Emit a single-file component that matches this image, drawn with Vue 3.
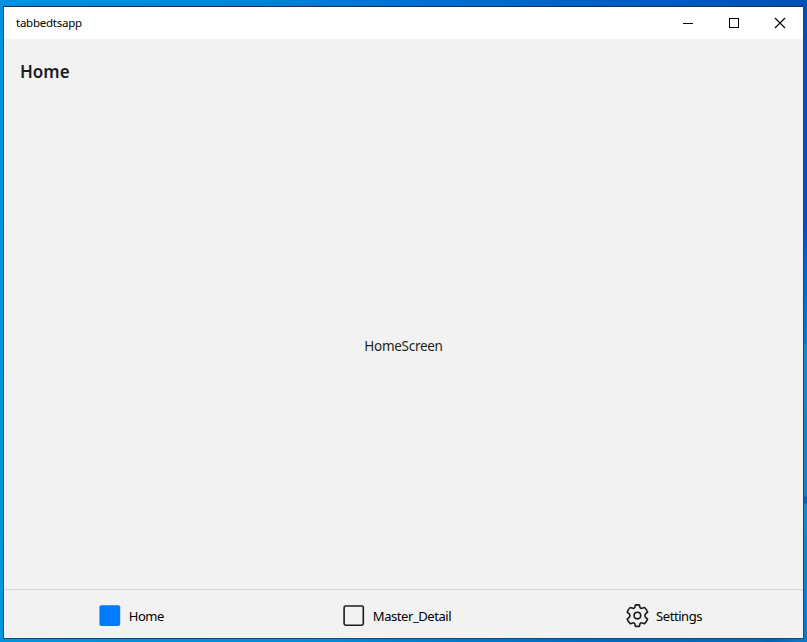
<script setup>
const tabs = [
  { id: 'home', label: 'Home', icon: 'filled' },
  { id: 'detail', label: 'Master_Detail', icon: 'square' },
  { id: 'settings', label: 'Settings', icon: 'gear' }
]
</script>

<template>
  <div class="desktop">
    <div class="window">
      <header class="titlebar">
        <span class="app-name">tabbedtsapp</span>
        <div class="controls">
          <span class="control">
            <svg width="12" height="12" viewBox="0 0 12 12" shape-rendering="crispEdges"><path d="M1 6.5H11" stroke="#000" /></svg>
          </span>
          <span class="control">
            <svg width="12" height="12" viewBox="0 0 12 12" shape-rendering="crispEdges"><rect x="1.5" y="1.5" width="9" height="9" fill="none" stroke="#000" /></svg>
          </span>
          <span class="control">
            <svg width="12" height="12" viewBox="0 0 12 12"><path d="M1 1L11 11M11 1L1 11" stroke="#000" stroke-width="1.15" /></svg>
          </span>
        </div>
      </header>
      <h1 class="heading">Home</h1>
      <main class="content"><span class="screen-name">HomeScreen</span></main>
      <nav class="tabs">
        <div v-for="tab in tabs" :key="tab.id" class="tab" :class="tab.id">
          <svg v-if="tab.icon === 'filled'" class="icon" viewBox="0 0 24 24">
            <rect x="1.4" y="1.2" width="20.8" height="20.8" rx="2" fill="#007aff" />
          </svg>
          <svg v-else-if="tab.icon === 'square'" class="icon" viewBox="0 0 24 24">
            <rect x="2.1" y="2" width="19.2" height="19.2" rx="1.6" fill="none" stroke="#1c1c1e" stroke-width="1.6" />
          </svg>
          <svg v-else class="icon" viewBox="0 0 24 24" fill="none" stroke="#1c1c1e" stroke-width="1.6" stroke-linejoin="round">
            <g transform="translate(0.4 -0.4)">
              <path d="M9.9 1.5Q12 1 14.1 1.5L14.5 3.7Q15 5.1 16.5 4.7L19.2 3.9Q21.3 5.8 22.2 8.5L20.2 10.2Q18.8 12 20.2 13.8L22.2 15.5Q21.3 18.2 19.2 20.1L16.5 19.3Q15 18.9 14.5 20.3L14.1 22.5Q12 23 9.9 22.5L9.5 20.3Q9 18.9 7.5 19.3L4.8 20.1Q2.7 18.2 1.8 15.5L3.8 13.8Q5.2 12 3.8 10.2L1.8 8.5Q2.7 5.8 4.8 3.9L7.5 4.7Q9 5.1 9.5 3.7Z" />
              <circle cx="12" cy="12" r="3.3" />
            </g>
          </svg>
          <span class="label">{{ tab.label }}</span>
        </div>
      </nav>
    </div>
  </div>
</template>

<style>
body {
  margin: 0;
  overflow: hidden;
}
</style>

<style scoped>
.desktop {
  box-sizing: border-box;
  width: 807px;
  height: 642px;
  padding: 6px 3px 3px;
  background:
    linear-gradient(180deg, #0052b8 0, #0050bd 220px, #006dd0 280px, #0878cf 344px, #1c87d2 345px, #1680cf 496px, #0062bd 497px, #0062bd 503px, #1b88d6 504px, #0879cd 642px) right top / 4px 100% no-repeat,
    linear-gradient(90deg, #0094df 0, #008bd9 40%, #0068bf 75%, #0869b7 94%, #0062b4 95%, #1279c7 100%) left bottom / 100% 4px no-repeat,
    linear-gradient(90deg, #0090e2 0, #0083da 30%, #0068cf 62%, #0050b8 100%) left top / 100% 7px no-repeat,
    linear-gradient(180deg, #0090e2, #0099df);
  font-family: "Noto Sans", "Open Sans", sans-serif;
}
.window {
  box-sizing: border-box;
  width: 801px;
  height: 633px;
  display: flex;
  flex-direction: column;
  border: 1px solid #174a70;
  border-top-color: #252d38;
  background: #f2f2f2;
}
.titlebar {
  display: flex;
  justify-content: space-between;
  height: 32px;
  padding-left: 12px;
  background: #fff;
}
.app-name {
  font-size: 11.5px;
  line-height: 32px;
  letter-spacing: -0.25px;
  color: #000;
}
.controls {
  display: flex;
}
.control {
  display: flex;
  align-items: center;
  justify-content: center;
  width: 46px;
}
.heading {
  margin: 0;
  padding: 20px 16px 0;
  height: 44px;
  font-size: 17px;
  line-height: 25px;
  font-weight: 600;
  color: #1c1c1e;
}
.content {
  flex: 1;
  display: flex;
  align-items: center;
  justify-content: center;
}
.screen-name {
  font-size: 13.5px;
  line-height: 20px;
  letter-spacing: -0.28px;
  color: #1f1f20;
}
.tabs {
  display: flex;
  height: 48px;
  border-top: 1px solid #d8d8d8;
}
.tab {
  flex: 1;
  display: flex;
  align-items: center;
  justify-content: center;
  gap: 7px;
  padding: 4px 12px 0 0;
}
.tab.detail {
  padding-right: 13.4px;
}
.tab.settings {
  padding-right: 12.6px;
}
.icon {
  flex: none;
  width: 24px;
  height: 24px;
}
.label {
  font-size: 13px;
  line-height: 20px;
  letter-spacing: -0.43px;
  color: #000;
}
</style>
